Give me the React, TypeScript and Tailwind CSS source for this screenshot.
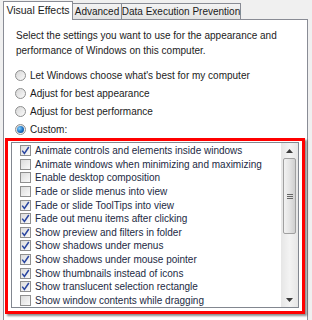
import React from 'react';

const tabs = ['Visual Effects', 'Advanced', 'Data Execution Prevention'];

const modes = [
  { label: "Let Windows choose what's best for my computer", on: false },
  { label: 'Adjust for best appearance', on: false },
  { label: 'Adjust for best performance', on: false },
  { label: 'Custom:', on: true },
];

const effects = [
  { label: 'Animate controls and elements inside windows', on: true },
  { label: 'Animate windows when minimizing and maximizing', on: false },
  { label: 'Enable desktop composition', on: false },
  { label: 'Fade or slide menus into view', on: false },
  { label: 'Fade or slide ToolTips into view', on: true },
  { label: 'Fade out menu items after clicking', on: true },
  { label: 'Show preview and filters in folder', on: true },
  { label: 'Show shadows under menus', on: true },
  { label: 'Show shadows under mouse pointer', on: true },
  { label: 'Show thumbnails instead of icons', on: true },
  { label: 'Show translucent selection rectangle', on: true },
  { label: 'Show window contents while dragging', on: false },
];

const Radio = ({ on }: { on: boolean }) => (
  <span className="flex h-[11px] w-[11px] shrink-0 items-center justify-center rounded-full border border-[#8e8f8f] bg-gradient-to-br from-[#d6d6d6] to-[#fbfbfb]">
    {on && (
      <span className="h-[7px] w-[7px] rounded-full bg-[radial-gradient(circle_at_35%_35%,#7fd0ff,#1b6fc2_55%,#0b3d7a)]" />
    )}
  </span>
);

const Check = ({ on }: { on: boolean }) => (
  <span className="flex h-[11px] w-[11px] shrink-0 items-center justify-center border border-[#8f8f8f] bg-gradient-to-br from-[#dcdcdc] to-[#fafafa]">
    {on && (
      <svg width="9" height="9" viewBox="0 0 9 9">
        <path d="M1.2 4.6 L3.4 7.4 L7.8 1" fill="none" stroke="#2a46a0" strokeWidth="1.5" />
      </svg>
    )}
  </span>
);

const Scrollbar = () => (
  <div className="flex w-[17px] shrink-0 flex-col bg-gradient-to-r from-[#e6e6e6] via-[#f3f3f3] to-[#e6e6e6]">
    <div className="flex h-[15px] items-center justify-center">
      <svg width="7" height="4" viewBox="0 0 7 4">
        <path d="M0 4 L3.5 0 L7 4 Z" fill="#3c3c3c" />
      </svg>
    </div>
    <div className="mx-[2px] flex h-[76px] items-center justify-center rounded-[2px] border border-[#a0a0a0] bg-gradient-to-r from-[#f2f2f2] via-[#e4e4e4] to-[#cfcfcf]">
      <div className="flex flex-col gap-[1px]">
        <span className="h-px w-[6px] bg-[#666]" />
        <span className="h-px w-[6px] bg-[#666]" />
        <span className="h-px w-[6px] bg-[#666]" />
      </div>
    </div>
    <div className="flex-1" />
    <div className="flex h-[15px] items-center justify-center">
      <svg width="7" height="4" viewBox="0 0 7 4">
        <path d="M0 0 L7 0 L3.5 4 Z" fill="#3c3c3c" />
      </svg>
    </div>
  </div>
);

export default function App() {
  return (
    <div
      className="h-[320px] w-[312px] overflow-hidden bg-[#f0f0f0] pl-[3px] pt-[1px] text-[10px] text-[#1b1b1b]"
      style={{ fontFamily: '"Liberation Sans", Arial, sans-serif' }}
    >
      <div className="flex h-[18px] items-end whitespace-nowrap">
        {tabs.map((t, i) =>
          i === 0 ? (
            <div
              key={t}
              className="relative z-10 -mb-px flex h-[19px] w-[70px] items-center justify-center border border-b-0 border-[#898c95] bg-white text-[10.5px]"
            >
              {t}
            </div>
          ) : (
            <div
              key={t}
              className={`flex h-[16px] items-center justify-center border border-b-0 border-l-0 border-[#898c95] bg-gradient-to-b from-[#f3f3f3] to-[#e3e3e3] ${
                i === 1 ? 'w-[49px]' : 'w-[119px]'
              }`}
            >
              {t}
            </div>
          )
        )}
      </div>
      <div className="h-[320px] w-[305px] border border-[#898c95] bg-white">
        <div className="whitespace-nowrap px-[12px] pt-[8px] leading-[15px]">
          <p>Select the settings you want to use for the appearance and</p>
          <p>performance of Windows on this computer.</p>
        </div>
        <div className="mt-[8px] flex flex-col whitespace-nowrap pl-[11px]">
          {modes.map((m) => (
            <div key={m.label} className="flex h-[18px] items-center gap-[4px]">
              <Radio on={m.on} />
              <span>{m.label}</span>
            </div>
          ))}
        </div>
        <div className="mx-[1px] h-[176px] w-[300px] border-[3px] border-[#ff0000] bg-white pb-[2px] pl-[3px] pr-[3px] pt-px shadow-[2px_2px_2px_rgba(0,0,0,0.45)]">
          <div className="flex h-[166px] overflow-hidden border border-[#828790] bg-white">
            <div className="flex-1 overflow-hidden pl-[8px] pt-px text-[#1c2a44]">
              {effects.map((e) => (
                <div key={e.label} className="flex h-[13.6px] items-center gap-[4px] whitespace-nowrap">
                  <Check on={e.on} />
                  <span>{e.label}</span>
                </div>
              ))}
            </div>
            <Scrollbar />
          </div>
        </div>
      </div>
    </div>
  );
}
